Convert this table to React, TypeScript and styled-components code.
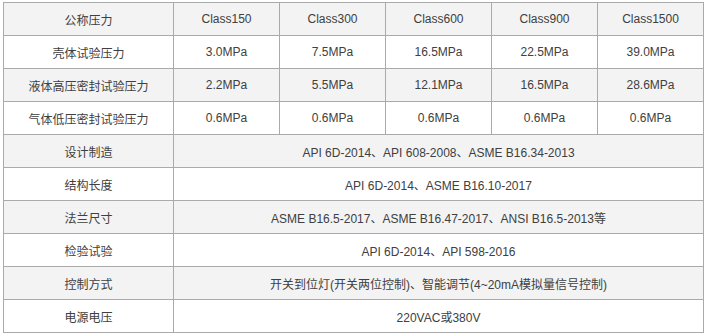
import React from "react";
import styled, { createGlobalStyle } from "styled-components";

const GlobalStyle = createGlobalStyle`
  body {
    margin: 0;
    background: #ffffff;
    font-family: "Liberation Sans", "Noto Sans CJK SC", sans-serif;
  }
`;

const Wrapper = styled.div`
  padding: 2px 0 0 3px;
`;

const SpecTable = styled.table`
  width: 700px;
  border-collapse: collapse;
  table-layout: fixed;
  border: 1px solid #aaaaaa;
  font-size: 12px;
  color: #404040;
`;

// 첫 칸(항목명)은 넓게, 나머지 등급 칸은 같은 폭
const Col = styled.col<{ $wide?: boolean }>`
  width: ${(p) => (p.$wide ? "170px" : "106px")};
`;

const Row = styled.tr<{ $shaded: boolean }>`
  height: 33px;
  background-color: ${(p) => (p.$shaded ? "#f3f3f3" : "#ffffff")};
`;

const Cell = styled.td`
  border: 1px solid #aaaaaa;
  text-align: center;
  vertical-align: middle;
  padding: 0 4px;
  white-space: nowrap;
`;

const classes = ["Class150", "Class300", "Class600", "Class900", "Class1500"];

const pressureRows: [string, string[]][] = [
  ["壳体试验压力", ["3.0MPa", "7.5MPa", "16.5MPa", "22.5MPa", "39.0MPa"]],
  ["液体高压密封试验压力", ["2.2MPa", "5.5MPa", "12.1MPa", "16.5MPa", "28.6MPa"]],
  ["气体低压密封试验压力", ["0.6MPa", "0.6MPa", "0.6MPa", "0.6MPa", "0.6MPa"]],
];

const specRows: [string, string][] = [
  ["设计制造", "API 6D-2014、API 608-2008、ASME B16.34-2013"],
  ["结构长度", "API 6D-2014、ASME B16.10-2017"],
  ["法兰尺寸", "ASME B16.5-2017、ASME B16.47-2017、ANSI B16.5-2013等"],
  ["检验试验", "API 6D-2014、API 598-2016"],
  ["控制方式", "开关到位灯(开关两位控制)、智能调节(4~20mA模拟量信号控制)"],
  ["电源电压", "220VAC或380V"],
];

export default function App() {
  return (
    <>
      <GlobalStyle />
      <Wrapper>
        <SpecTable>
          <colgroup>
            <Col $wide />
            {classes.map((c) => (
              <Col key={c} />
            ))}
          </colgroup>
          <tbody>
            <Row $shaded>
              <Cell>公称压力</Cell>
              {classes.map((c) => (
                <Cell key={c}>{c}</Cell>
              ))}
            </Row>
            {pressureRows.map(([label, values], i) => (
              <Row key={label} $shaded={i % 2 === 1}>
                <Cell>{label}</Cell>
                {values.map((v, j) => (
                  <Cell key={j}>{v}</Cell>
                ))}
              </Row>
            ))}
            {specRows.map(([label, value], i) => (
              <Row key={label} $shaded={i % 2 === 0}>
                <Cell>{label}</Cell>
                <Cell colSpan={5}>{value}</Cell>
              </Row>
            ))}
          </tbody>
        </SpecTable>
      </Wrapper>
    </>
  );
}
